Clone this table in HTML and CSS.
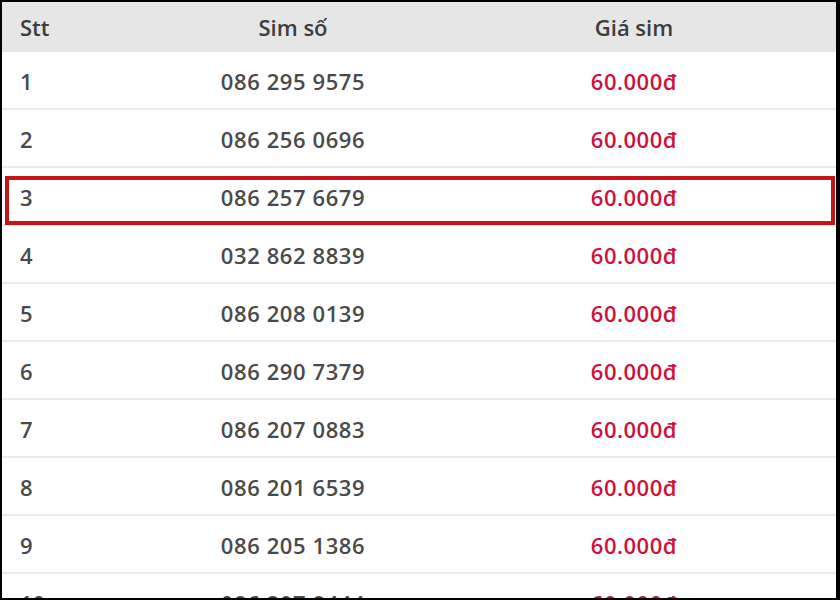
FILE: index.html
```html
<!DOCTYPE html>
<html lang="vi">
<head>
<meta charset="utf-8">
<title>Sim số</title>
<link rel="stylesheet" href="styles.css">
</head>
<body>
<div class="frame">
  <div class="sim-table">
    <div class="row head">
      <div class="c-stt">Stt</div>
      <div class="c-num">Sim số</div>
      <div class="c-price">Giá sim</div>
    </div>
    <div class="row"><div class="c-stt">1</div><div class="c-num">086 295 9575</div><div class="c-price">60.000đ</div></div>
    <div class="row"><div class="c-stt">2</div><div class="c-num">086 256 0696</div><div class="c-price">60.000đ</div></div>
    <div class="row marked"><div class="c-stt">3</div><div class="c-num">086 257 6679</div><div class="c-price">60.000đ</div></div>
    <div class="row"><div class="c-stt">4</div><div class="c-num">032 862 8839</div><div class="c-price">60.000đ</div></div>
    <div class="row"><div class="c-stt">5</div><div class="c-num">086 208 0139</div><div class="c-price">60.000đ</div></div>
    <div class="row"><div class="c-stt">6</div><div class="c-num">086 290 7379</div><div class="c-price">60.000đ</div></div>
    <div class="row"><div class="c-stt">7</div><div class="c-num">086 207 0883</div><div class="c-price">60.000đ</div></div>
    <div class="row"><div class="c-stt">8</div><div class="c-num">086 201 6539</div><div class="c-price">60.000đ</div></div>
    <div class="row"><div class="c-stt">9</div><div class="c-num">086 205 1386</div><div class="c-price">60.000đ</div></div>
    <div class="row"><div class="c-stt">10</div><div class="c-num">086 207 8444</div><div class="c-price">60.000đ</div></div>
  </div>
</div>
</body>
</html>
```
FILE: styles.css
```css
html, body {
  margin: 0;
  padding: 0;
  background: #000;
}
.frame {
  width: 840px;
  height: 600px;
  box-sizing: border-box;
  border-style: solid;
  border-color: #000;
  border-width: 2px 4px 2px 2px;
  background: #fff;
  overflow: hidden;
  font-family: "Open Sans", "Noto Sans", sans-serif;
  font-weight: 600;
  font-size: 22px;
  color: #4a4a4a;
}
.sim-table {
  display: flex;
  flex-direction: column;
}
.row {
  display: grid;
  grid-template-columns: 156px 270px 1fr;
  align-items: center;
  height: 58px;
  box-sizing: border-box;
  border-bottom: 2px solid #ebebeb;
  position: relative;
  padding-top: 2px;
}
.row.head {
  height: 50px;
  padding-top: 0;
  background: #e6e6e6;
  border-bottom: none;
  color: #3d3d3d;
}
.c-stt {
  padding-left: 18px;
}
.c-num {
  text-align: center;
  letter-spacing: 0.6px;
}
.c-price {
  text-align: center;
  color: #d0113a;
  padding-left: 4px;
  letter-spacing: 0.5px;
}
.head .c-num,
.head .c-price {
  letter-spacing: 0;
}
.head .c-price {
  color: #3d3d3d;
}
.row.marked::after {
  content: "";
  position: absolute;
  left: 3px;
  right: 1px;
  top: 8px;
  bottom: -1px;
  border: 4px solid #c4141c;
}
```
